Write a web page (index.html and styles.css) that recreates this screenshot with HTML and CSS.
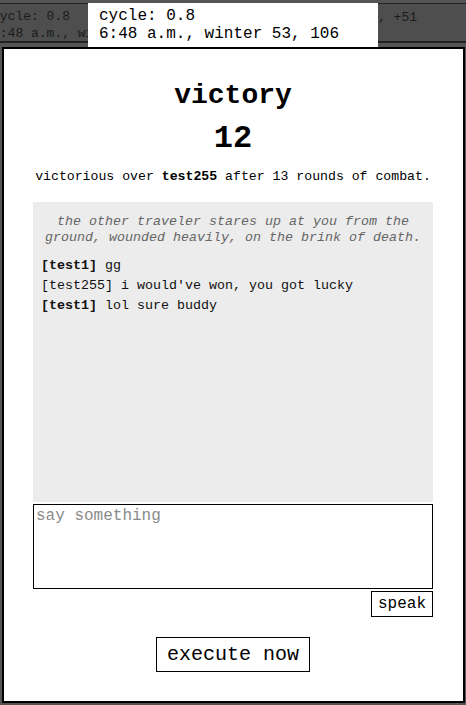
FILE: index.html
```html
<!DOCTYPE html>
<html>
<head>
<meta charset="utf-8">
<link rel="stylesheet" href="styles.css">
</head>
<body>
<div class="page">
  <header class="topbar">
    <div class="stat-left">cycle: 0.8<br>6:48 a.m., winter 53, 106</div>
    <div class="stat-right">1, +51</div>
  </header>
  <div class="under">
    <div class="under-box">[near] the old traveler's camp</div>
  </div>
</div>

<div class="tooltip">cycle: 0.8<br>6:48 a.m., winter 53, 106</div>

<div class="modal">
  <div class="modal-inner">
    <h1 class="title">victory</h1>
    <div class="score">12</div>
    <p class="summary">victorious over <b>test255</b> after 13 rounds of combat.</p>
    <div class="chatlog">
      <p class="narration">the other traveler stares up at you from the ground, wounded heavily, on the brink of death.</p>
      <div class="messages">
        <div class="msg"><b>[test1]</b> gg</div>
        <div class="msg">[test255] i would've won, you got lucky</div>
        <div class="msg"><b>[test1]</b> lol sure buddy</div>
      </div>
    </div>
    <textarea class="say" placeholder="say something"></textarea>
    <div class="speak-row"><button class="btn speak">speak</button></div>
    <div class="exec-row"><button class="btn execute">execute now</button></div>
  </div>
</div>
</body>
</html>
```
FILE: styles.css
```css
html, body {
  margin: 0;
  padding: 0;
}
body {
  background: #555555;
  font-family: "Liberation Mono", "Courier New", monospace;
  width: 466px;
  height: 705px;
  overflow: hidden;
  position: relative;
}
.page {
  padding-top: 3px;
}
.topbar {
  display: flex;
  background: #4e4e4e;
  border-top: 1px solid #222;
  border-bottom: 2px solid #222;
  height: 37px;
  font-size: 13px;
  line-height: 17px;
  color: #1c1c1c;
  white-space: nowrap;
  box-sizing: content-box;
}
.stat-left {
  margin-left: -8px;
  padding-top: 4px;
}
.stat-right {
  margin-left: auto;
  margin-right: 49px;
  padding-top: 5px;
}
.under {
  padding-top: 639px;
}
.under-box {
  margin-left: 212px;
  width: 208px;
  height: 16px;
  border: 1px solid #2a2a2a;
  font-size: 13px;
  line-height: 16px;
  color: #2a2a2a;
  padding: 2px 4px 0;
  white-space: nowrap;
  overflow: hidden;
}
.tooltip {
  position: absolute;
  left: 88px;
  top: 3px;
  width: 290px;
  height: 45px;
  box-sizing: border-box;
  background: #fff;
  padding: 4px 0 0 11px;
  font-size: 16px;
  line-height: 18px;
  color: #000;
  white-space: nowrap;
}
.modal {
  position: absolute;
  left: 2px;
  top: 47px;
  width: 463px;
  height: 656px;
  box-sizing: border-box;
  background: #fff;
  border: 2px solid #000;
}
.modal-inner {
  width: 400px;
  margin-left: 29px;
  padding-top: 31px;
  text-align: center;
  color: #000;
}
.title {
  margin: 0;
  font-size: 28px;
  line-height: 32px;
  font-weight: bold;
}
.score {
  margin-top: 9px;
  font-size: 32px;
  line-height: 36px;
  font-weight: bold;
}
.summary {
  margin: 12px 0 0;
  font-size: 13.2px;
  line-height: 16px;
  white-space: nowrap;
}
.chatlog {
  margin-top: 17px;
  height: 300px;
  background: #ececec;
  box-sizing: border-box;
  padding: 12px 8px 0;
  font-size: 13.33px;
  text-align: left;
}
.narration {
  margin: 0;
  text-align: center;
  font-style: italic;
  color: #666;
  line-height: 15.5px;
}
.messages {
  margin-top: 11px;
  line-height: 20px;
  color: #111;
}
.say {
  display: block;
  margin: 2px 0 0;
  width: 400px;
  height: 85px;
  box-sizing: border-box;
  border: 1px solid #000;
  padding: 2px 2px 1px;
  font-family: "Liberation Mono", "Courier New", monospace;
  font-size: 16px;
  resize: none;
  outline: none;
  background: #fff;
}
.say::placeholder {
  color: #8a8a8a;
}
.speak-row {
  display: flex;
  justify-content: flex-end;
  margin-top: 2px;
}
.btn {
  font-family: "Liberation Mono", "Courier New", monospace;
  background: #fff;
  color: #000;
  border: 1px solid #000;
  border-radius: 0;
  margin: 0;
  cursor: pointer;
}
.speak {
  font-size: 16px;
  line-height: 18px;
  padding: 3px 6px;
}
.exec-row {
  display: flex;
  justify-content: center;
  margin-top: 20px;
}
.execute {
  font-size: 20px;
  line-height: 23px;
  padding: 5px 10px;
}
```
